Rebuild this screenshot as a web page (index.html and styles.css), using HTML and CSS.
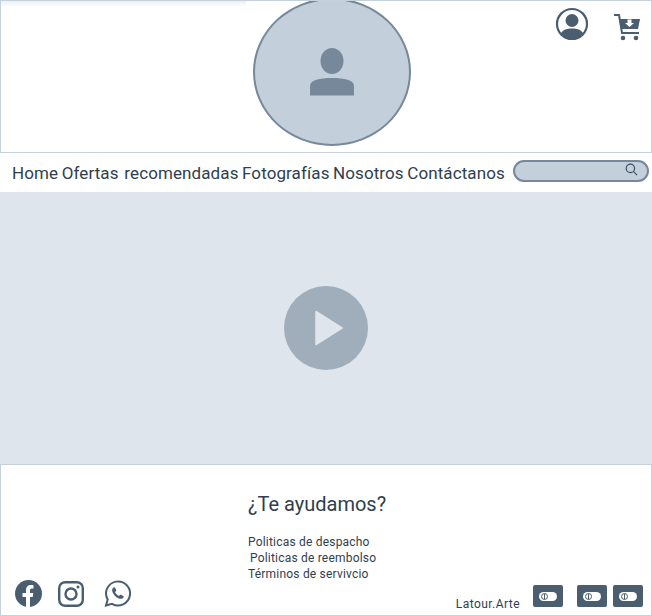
FILE: index.html
```html
<!DOCTYPE html>
<html lang="es">
<head>
    <meta charset="UTF-8">
    <meta name="viewport" content="width=device-width, initial-scale=1.0">
    <title>Latour.Arte</title>
    <link rel="stylesheet" href="styles.css">
</head>
<body>
    <header class="top">
        <div class="top-shade"></div>
        <div class="logo">
            <svg class="logo-user" viewBox="0 0 44 48"><ellipse cx="22" cy="13" rx="11.500" ry="13"/><path d="M0 47.500V38C0 32 10 30 22 30S44 32 44 38V47.500Z"/></svg>
        </div>
        <div class="top-icons">
            <svg class="icon-user" viewBox="0 0 34 34"><defs><clipPath id="ring"><circle cx="17" cy="17" r="14.500"/></clipPath></defs><circle cx="17" cy="17" r="15" fill="none" stroke="#4a5e70" stroke-width="2.200"/><g clip-path="url(#ring)" fill="#4a5e70"><circle cx="17" cy="13.500" r="6.500"/><path d="M4 34C4 24 10 21.500 17 21.500S30 24 30 34Z"/></g></svg>
            <svg class="icon-cart" viewBox="0 0 28 28"><path d="M1 2H6L9 20H26" fill="none" stroke="#4a5e70" stroke-width="2"/><path d="M7 6H27L25 16H8.500Z" fill="#4a5e70"/><path d="M14.500 6.500H18.500V10H21L16.500 14 12 10H14.500Z" fill="#fff"/><circle cx="10" cy="25" r="2.300" fill="#4a5e70"/><circle cx="23" cy="25" r="2.300" fill="#4a5e70"/></svg>
        </div>
    </header>
    <nav class="menu">
        <ul>
            <li><a href="#">Home</a></li>
            <li><a href="#">Ofertas recomendadas</a></li>
            <li><a href="#">Fotografías</a></li>
            <li><a href="#">Nosotros</a></li>
            <li><a href="#">Contáctanos</a></li>
        </ul>
        <div class="search">
            <svg viewBox="0 0 14 14"><circle cx="5.800" cy="5.800" r="4.500" fill="none" stroke="#3d4f60" stroke-width="1.300"/><path d="M9 9L13 13" stroke="#3d4f60" stroke-width="1.300"/></svg>
        </div>
    </nav>
    <section class="video">
        <div class="play"><svg viewBox="0 0 28 36"><path d="M1 1.500L27 18 1 34.500Z" fill="#dfe5ed" stroke="#dfe5ed" stroke-width="1.500" stroke-linejoin="round"/></svg></div>
    </section>
    <footer class="bottom">
        <div class="help">
            <h2>¿Te ayudamos?</h2>
            <ul>
                <li>Politicas de despacho</li>
                <li class="nudge">Politicas de reembolso</li>
                <li>Términos de servivcio</li>
            </ul>
        </div>
        <div class="bottom-row">
            <div class="social">
                <svg class="fb" viewBox="0 0 27 27"><circle cx="13.500" cy="13.500" r="13.500" fill="#4a5e70"/><path d="M11 27V17H7.500V13H11V10C11 6.800 13 5 16 5C17.300 5 18.500 5.200 18.500 5.200V8.500H16.800C15.300 8.500 15 9.400 15 10.300V13H18.300L17.700 17H15V27Z" fill="#fff"/></svg>
                <svg class="ig" viewBox="0 0 26 26"><rect x="1.200" y="1.200" width="23.600" height="23.600" rx="6" fill="none" stroke="#4a5e70" stroke-width="2.400"/><circle cx="13" cy="13" r="5.500" fill="none" stroke="#4a5e70" stroke-width="2.400"/><circle cx="20" cy="6" r="1.500" fill="#4a5e70"/></svg>
                <svg class="wa" viewBox="0 0 27 27"><path d="M2 25.500L3.700 19.500A12 12 0 1 1 8 23.800Z" fill="none" stroke="#4a5e70" stroke-width="2"/><path d="M9.500 7.500C8.500 8.200 7.800 9.500 8.200 11C9 14.500 12.500 18 16 18.800C17.500 19.100 19 18.400 19.600 17.300C19.900 16.700 19.800 16.200 19.300 15.900L17 14.800C16.500 14.600 16.100 14.700 15.800 15.100L15 16C13.200 15.200 11.800 13.800 11 12L11.900 11.200C12.300 10.900 12.400 10.500 12.200 10L11.100 7.700C10.800 7.200 10 7.100 9.500 7.500Z" fill="#4a5e70"/></svg>
            </div>
            <div class="brand">
                <span class="brand-name">Latour.Arte</span>
                <span class="badge"><span class="pill"><span class="dot"></span></span></span>
                <span class="badge badge-gap"><span class="pill"><span class="dot"></span></span></span>
                <span class="badge"><span class="pill"><span class="dot"></span></span></span>
            </div>
        </div>
    </footer>
</body>
</html>
```
FILE: styles.css
```css
* {
    box-sizing: border-box;
}
body {
    font-family: Roboto, sans-serif;
    color: #2f3e4e;
    margin: 0;
    background-color: #fff;
    width: 652px;
    height: 616px;
    overflow: hidden;
}
.top {
    position: relative;
    height: 153px;
    border: 1px solid #c5d2de;
    overflow: hidden;
    display: flex;
    justify-content: center;
}
.top-shade {
    position: absolute;
    left: 0;
    top: 0;
    width: 245px;
    height: 6px;
    background: linear-gradient(rgba(197,210,222,0.35), rgba(255,255,255,0));
}
.logo {
    width: 158px;
    height: 148px;
    margin-top: -3px;
    margin-left: 12px;
    flex: none;
    border: 2px solid #76889a;
    border-radius: 50%;
    background-color: #c3cfda;
    display: flex;
    align-items: center;
    justify-content: center;
}
.logo-user {
    width: 44px;
    height: 48px;
    fill: #76889a;
}
.top-icons {
    position: absolute;
    top: 6px;
    right: 10px;
    display: flex;
    gap: 24px;
    align-items: flex-start;
}
.icon-user {
    width: 34px;
    height: 34px;
}
.icon-cart {
    width: 28px;
    height: 28px;
    margin-top: 6px;
}
.menu {
    height: 39px;
    display: flex;
    align-items: center;
    padding-left: 12px;
}
.menu ul {
    list-style-type: none;
    padding: 0;
    margin: 0;
    display: flex;
    gap: 3.5px;
    font-size: 17px;
    letter-spacing: 0.1px;
    word-spacing: 1.5px;
    white-space: nowrap;
    width: 493px;
}
.menu a {
    color: #2f3e4e;
    text-decoration: none;
}
.search {
    width: 136px;
    height: 22px;
    margin-left: 8px;
    margin-top: -4px;
    border: 2px solid #76889a;
    border-radius: 11px;
    background-color: #c3cfda;
    display: flex;
    justify-content: flex-end;
    padding: 1px 9px 0 0;
}
.search svg {
    width: 13px;
    height: 13px;
}
.video {
    height: 272px;
    background-color: #dfe5ed;
    display: flex;
    align-items: center;
    justify-content: center;
}
.play {
    width: 84px;
    height: 84px;
    border-radius: 50%;
    background-color: #a0aebb;
    display: flex;
    align-items: center;
    justify-content: center;
    padding-left: 6px;
}
.play svg {
    width: 28px;
    height: 36px;
}
.bottom {
    height: 152px;
    border: 1px solid #c5d2de;
    display: flex;
    flex-direction: column;
}
.help {
    margin-left: 247px;
    padding-top: 27px;
}
.help h2 {
    font-size: 20px;
    font-weight: 400;
    line-height: 24px;
    margin: 0 0 18px;
}
.help ul {
    list-style-type: none;
    padding: 0;
    margin: 0;
    font-size: 12px;
    letter-spacing: 0.2px;
    line-height: 16px;
}
.nudge {
    padding-left: 2px;
}
.bottom-row {
    display: flex;
    justify-content: space-between;
    align-items: flex-end;
    padding: 0 8px 0 14px;
    margin-top: -3px;
}
.social {
    display: flex;
    align-items: center;
}
.fb {
    width: 27px;
    height: 27px;
}
.ig {
    width: 26px;
    height: 26px;
    margin-left: 16px;
    margin-top: 2px;
}
.wa {
    width: 27px;
    height: 27px;
    margin-left: 20px;
}
.brand {
    display: flex;
    align-items: flex-end;
    gap: 6px;
}
.brand-name {
    font-size: 12px;
    letter-spacing: 0.45px;
    margin-right: 7px;
    margin-bottom: -4px;
}
.badge {
    width: 30px;
    height: 22px;
    border-radius: 2px;
    background-color: #4a5e70;
    display: flex;
    align-items: center;
    justify-content: center;
}
.badge-gap {
    margin-left: 8px;
}
.pill {
    width: 18px;
    height: 9px;
    border-radius: 5px;
    background-color: #fff;
    display: flex;
    align-items: center;
    padding-left: 2px;
}
.dot {
    width: 7px;
    height: 7px;
    border: 1px solid #4a5e70;
    border-radius: 50%;
    background: linear-gradient(90deg, transparent 2px, #4a5e70 2px, #4a5e70 3px, transparent 3px);
}
```
